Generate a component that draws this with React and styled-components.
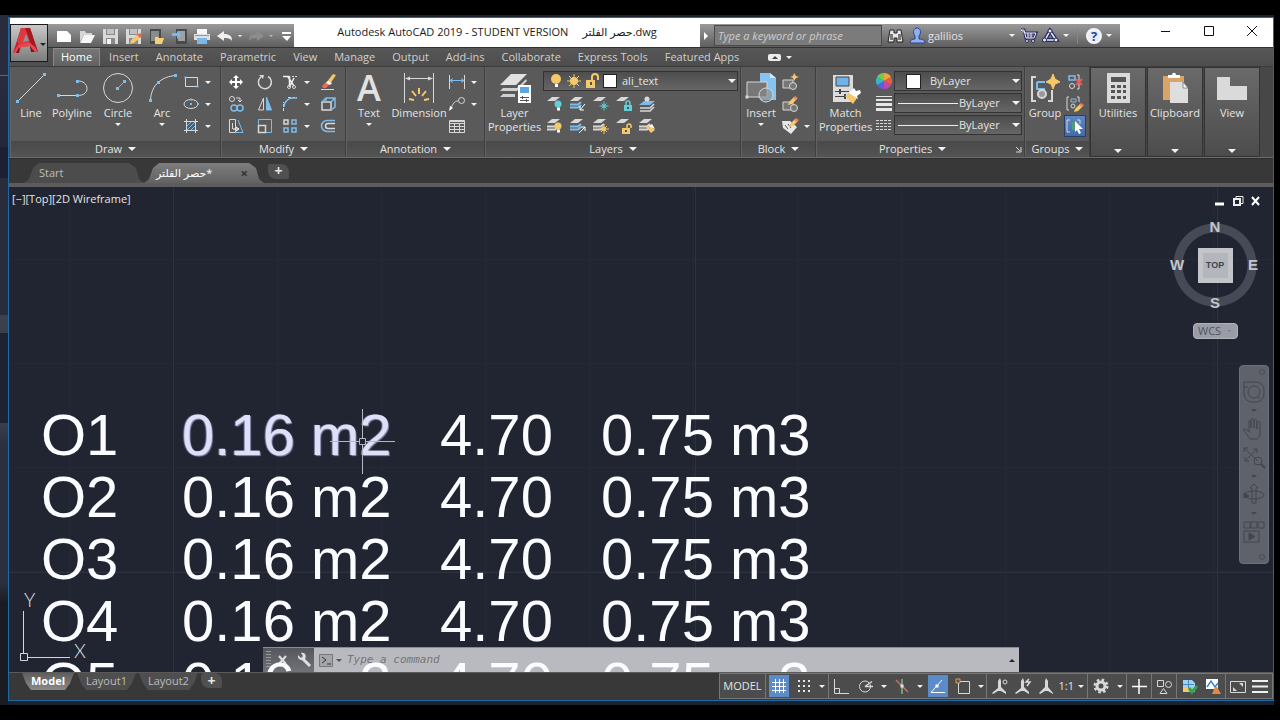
import React from 'react';
import styled, { createGlobalStyle, css } from 'styled-components';

const GlobalStyle = createGlobalStyle`
  * {
    box-sizing: border-box;
  }

  body {
    margin: 0;
    background: #000;
    font-family: 'Open Sans', 'Noto Sans', 'DejaVu Sans', sans-serif;
    font-size: 11px;
    line-height: 14px;
    color: #e4e4e4;
  }

  button,
  input,
  select {
    font: inherit;
    color: inherit;
    border: 0;
    margin: 0;
    padding: 0;
    background: none;
    border-radius: 0;
  }

  a {
    color: inherit;
    text-decoration: none;
  }
`;

const L = '#d8d8d8'; // light stroke
const B = '#7dbdec'; // blue accent
const Y = '#f5c869'; // yellow accent
const T = '#5fd0d8'; // teal accent

/* ---------- icon drawings ---------- */

const Dot = ({ x, y, s = 3, c = B }) => (
  <rect x={x - s / 2} y={y - s / 2} width={s} height={s} fill={c} stroke="none" />
);

const Sheet = ({ y, c = L }) => (
  <path d={`M2 ${y + 4} L7 ${y} H15 L10 ${y + 4} Z`} fill={c} stroke="none" />
);

const Stack = ({ c = L }) => (
  <>
    <Sheet y={3} />
    <path d="M2 10.5H10L13 8M2 13.5H10L13 11" stroke={c} strokeWidth="2" />
  </>
);

const Bulb = ({ x, y, c, r = 3.5 }) => (
  <g stroke="none">
    <circle cx={x} cy={y} r={r} fill={c} />
    <rect x={x - 1} y={y + r} width="3" height="3" fill="#fff" />
  </g>
);

const Sun = ({ x, y, r = 3, c = Y }) => (
  <g stroke={c}>
    <circle cx={x} cy={y} r={r} fill={c} stroke="none" />
    <path d={`M${x} ${y - r - 3}V${y + r + 3}M${x - r - 3} ${y}H${x + r + 3}M${x - r - 1} ${y - r - 1}L${x + r + 1} ${y + r + 1}M${x + r + 1} ${y - r - 1}L${x - r - 1} ${y + r + 1}`} />
  </g>
);

const Lock = ({ x, y, c, open }) => (
  <g>
    <rect x={x} y={y} width="8" height="6" fill={c} stroke="none" />
    <path
      d={open ? `M${x + 5} ${y}v-2a2 2 0 0 1 4 0v2` : `M${x + 2} ${y}v-2a2 2 0 0 1 4 0v2`}
      stroke={c}
      strokeWidth="1.5"
    />
    <rect x={x + 3} y={y + 2} width="2" height="2" fill="#555" stroke="none" />
  </g>
);

const Pencil = ({ x, y }) => (
  <g stroke="none">
    <path d={`M${x} ${y + 8}l1-3 5-5 3 2-5 5z`} fill={Y} />
    <path d={`M${x + 5} ${y + 1}l2-2 3 2-2 2z`} fill="#f08060" />
  </g>
);

const icons = {
  /* application + quick access */
  logo: (
    <g stroke="none">
      <path d="M1 25L9 0h9l8 24h-6l-2-6-9 1-2 6z" fill="#c8202a" />
      <path d="M9 0h9l3 9-5 5-9 3-2-4z" fill="#df3940" />
      <path d="M11 14l3-8 3 7z" fill="#8d959a" />
      <path d="M13 0h5l8 24h-4z" fill="#a51820" />
      <path d="M1 25l5-8 11-3 6 5 3 5h-3l-5-6-8 1-4 2v4z" fill="#e8484c" />
      <path d="M4 25l3-6v6zM19 24l-1-6 4 6z" fill="#7b1119" />
    </g>
  ),
  newFile: <path d="M2 4h10l4 4v7H2z" fill="#fff" stroke="none" />,
  open: (
    <g stroke="none">
      <path d="M2 4h5l1 2h6v2H6l-4 7z" fill="#d6d6d6" />
      <path d="M6 8h11l-4 8H2z" fill="#f6f6f6" />
    </g>
  ),
  save: (
    <g stroke="none">
      <path d="M2 2h15v15H2z" fill="#d9d9d9" />
      <path d="M5 2h9v6H5zM5 11h9v6H5z" fill="#8a8a8a" />
      <path d="M6 2h7v5H6z" fill="#c2c2c2" />
      <path d="M6 12h4v5H6z" fill="#f4f4f4" />
    </g>
  ),
  saveAs: (
    <g stroke="none">
      <path d="M2 2h15v15H2z" fill="#d9d9d9" />
      <path d="M5 2h9v6H5zM5 11h9v6H5z" fill="#8a8a8a" />
      <path d="M6 2h7v5H6z" fill="#c2c2c2" />
      <path d="M6 17l1-4 7-6 3 3-7 6z" fill={Y} />
      <path d="M13 8l3-2 2 2-2 3z" fill="#e0694f" />
    </g>
  ),
  webOpen: (
    <g stroke="none">
      <path d="M3 2h11v15H3z" fill="#4a4a4a" />
      <path d="M4 4h8v10H4z" fill="#8b8b8b" />
      <path d="M8 10h3l1 1h5l-2 6H8z" fill="#f3cf78" />
    </g>
  ),
  webSave: (
    <g stroke="none">
      <path d="M6 2h11v15H6z" fill="#4a4a4a" />
      <path d="M8 4h7v10H8z" fill="#a0a0a0" />
      <path d="M2 6h5V4l5 4-5 4v-3H2z" fill="#7ab8ea" />
    </g>
  ),
  print: (
    <g stroke="none">
      <path d="M4 2h10v5H4z" fill="#f6f6f6" />
      <path d="M1 7h16v6H1z" fill="#dedede" />
      <path d="M4 11h10v6H4z" fill="#7ab8ea" />
      <path d="M2 8h14v1H2z" fill="#999" />
    </g>
  ),
  undo: <path d="M1 9l7-5v3c6 0 8 2 8 7-2-3-4-3-8-3v3z" fill="#f0f0f0" stroke="none" />,
  redo: <path d="M17 9l-7-5v3c-6 0-8 2-8 7 2-3 4-3 8-3v3z" fill="#8d8d8d" stroke="none" />,
  more: <path d="M5 5h9v2H5zM5 9h9l-4 5z" fill="#fff" stroke="none" />,

  /* info center */
  play: <path d="M3 5l4 4-4 4z" fill="#fff" stroke="none" />,
  binoculars: (
    <g stroke="#222" strokeWidth="1">
      <path d="M4 3h4v3h3V3h4l2 12h-6v-4H8v4H2z" fill="#e8e8e8" />
      <path d="M4 7h3v6H4zM12 7h3v6h-3z" fill="#777" stroke="none" />
    </g>
  ),
  user: (
    <g stroke="#2b448c" fill="#8fb0f5">
      <path d="M2 16c0-3 3-4 5-4V9C4 5 6 1 9 1s5 4 2 8v3c3 0 6 1 6 4z" />
    </g>
  ),
  cart: (
    <g>
      <path d="M2 3h3l2 8h8l2-5H6" stroke="#262b5c" strokeWidth="3" />
      <path d="M2 3h3l2 8h8l2-5H6zM9 6v5M12 6v5" stroke="#eef" />
      <circle cx="8" cy="14" r="1.500" fill="#eef" stroke="#262b5c" />
      <circle cx="14" cy="14" r="1.500" fill="#eef" stroke="#262b5c" />
    </g>
  ),
  share: (
    <g>
      <path d="M9 4L4 13h11z" stroke="#262b5c" strokeWidth="4" />
      <path d="M9 4L4 13h11z" stroke="#e8eaff" strokeWidth="1.500" />
      <circle cx="9" cy="4" r="2" fill="#e8eaff" stroke="#262b5c" />
      <circle cx="3.500" cy="13" r="2" fill="#e8eaff" stroke="#262b5c" />
      <circle cx="15" cy="13" r="2" fill="#e8eaff" stroke="#262b5c" />
    </g>
  ),

  /* draw */
  line: (
    <>
      <path d="M3 29L29 3" />
      <Dot x={2.5} y={29.5} />
      <Dot x={29.5} y={2.5} />
    </>
  ),
  polyline: (
    <>
      <path d="M2 23.5H22C27 23.5 31 21 31 16.5S27 9 22 9" />
      <Dot x={2.5} y={23.5} />
      <Dot x={21.5} y={23.5} />
      <Dot x={21.5} y={9.5} />
    </>
  ),
  circle: (
    <>
      <circle cx="16" cy="16" r="14.5" />
      <path d="M16 16l7-7" stroke={B} />
      <Dot x={15.5} y={16.5} />
      <Dot x={22.5} y={9.5} />
    </>
  ),
  arc: (
    <>
      <path d="M4.500 28C5 20 8 14 12 10.500 17 6 23 4 30 3.500" />
      <Dot x={4.5} y={28.5} />
      <Dot x={12.5} y={10.5} />
      <Dot x={29.5} y={3.5} />
    </>
  ),
  rect: (
    <>
      <path d="M4.500 5.500h12v9h-12z" />
      <Dot x={4.5} y={5.5} s={2} />
      <Dot x={16.5} y={14.5} s={2} />
    </>
  ),
  ellipse: (
    <>
      <ellipse cx="10" cy="10" rx="7" ry="4.500" />
      <Dot x={10} y={10} s={2} />
      <Dot x={10} y={5.5} s={2} />
      <Dot x={17} y={10} s={2} />
    </>
  ),
  hatch: (
    <>
      <path d="M5.500 3v14M14.500 3v14M3 5.500h14M3 14.500h14" />
      <path d="M6 10l4-4M6 14l8-8M10 14l4-4" stroke={B} />
    </>
  ),

  /* modify */
  move: (
    <path
      d="M10 3l3 3h-2v3h3V7l3 3-3 3v-2h-3v3h2l-3 3-3-3h2v-3H6v2l-3-3 3-3v2h3V6H7z"
      fill="#fff"
      stroke="none"
    />
  ),
  rotate: (
    <>
      <path d="M13 4.500A6.500 6.500 0 1 1 6 5" strokeWidth="1.500" />
      <path d="M4 3l5 0-1 4z" fill={L} stroke="none" />
    </>
  ),
  trim: (
    <>
      <path d="M3 4.500h6M9.500 4v11M8 5l6 9M14 6l-4 8" stroke="#eee" strokeWidth="1.500" />
      <circle cx="9" cy="15" r="1.500" />
      <circle cx="14" cy="15" r="1.500" />
      <path d="M12 4.500h5" strokeDasharray="2 1" />
    </>
  ),
  erase: (
    <g stroke="none">
      <path d="M8 11l7-9 3 1-6 9z" fill={Y} />
      <path d="M4 14l4-4 4 2-4 4H5z" fill="#ee6a55" />
      <path d="M8 11l2-2 4 2-2 2z" fill="#fff" />
      <path d="M3 17h13v1H3z" fill={L} />
    </g>
  ),
  copy: (
    <>
      <circle cx="6" cy="5" r="2.500" />
      <path d="M10 4h4v4M12 6l2 2 2-2" />
      <g stroke={B} strokeWidth="1.500">
        <circle cx="8" cy="14" r="3" />
        <circle cx="14" cy="14" r="3" />
      </g>
    </>
  ),
  mirror: (
    <>
      <path d="M8.500 4v12h-5z" />
      <path d="M11.500 3v13h5z" fill={B} stroke={B} />
    </>
  ),
  fillet: (
    <>
      <path d="M3.500 17V8M8 3.500h9" strokeDasharray="3 1" />
      <path d="M4 13C4 8 8 4 13 4h4" stroke={B} strokeWidth="1.500" />
    </>
  ),
  explode: (
    <>
      <path d="M4 8h9v8H4z" strokeWidth="1.500" />
      <path d="M4 8l4-4h9v9l-4 3M13 8l4-4M8 4v4" stroke={B} strokeWidth="1.500" />
    </>
  ),
  stretch: (
    <>
      <path d="M3.500 3.500h6v13h-6zM6.500 7v6" />
      <path d="M12 4l5 12.500H9" stroke={B} />
      <path d="M7 13h5M10 11l3 2-3 2" stroke="#fff" />
    </>
  ),
  scale: (
    <>
      <path d="M3.500 8.500V3.500h13v13H11" stroke={B} />
      <path d="M3.500 9.500h7v7h-7z" strokeWidth="1.500" />
    </>
  ),
  array: (
    <>
      <path d="M4 4h4v4H4z" strokeWidth="1.500" />
      <path d="M12 4h4v4h-4zM4 12h4v4H4zM12 12h4v4h-4z" stroke={B} strokeWidth="1.500" />
    </>
  ),
  offset: (
    <>
      <path d="M17 4.500H9a5.500 5.500 0 0 0 0 11h8" stroke={B} strokeWidth="1.500" />
      <path d="M17 7.500h-7a2.500 2.500 0 0 0 0 5h7" strokeWidth="1.500" />
    </>
  ),

  /* annotation */
  dimension: (
    <>
      <path d="M1.500 1v30M30.500 1v30M3 6.500h26" />
      <path d="M2 6.500l5-2v4zM30 6.500l-5-2v4z" fill={L} stroke="none" />
      <path d="M6 27l5 1M9 19l4 5M16 16v6M23 19l-4 5M26 27l-5 1" stroke={Y} strokeWidth="2" />
    </>
  ),
  linear: (
    <>
      <path d="M2.500 3v14M17.500 3v14" />
      <path d="M3 8.500h14M6 6.500l-3 2 3 2M14 6.500l3 2-3 2" stroke={B} />
    </>
  ),
  leader: (
    <>
      <circle cx="14.500" cy="6.500" r="3" />
      <path d="M11 7C7 7 6 10 3.500 15" />
      <path d="M2 17l1-5 3 2z" fill="#fff" stroke="none" />
    </>
  ),
  table: <path d="M2.500 4.500h15v12h-15zM2.500 7.500h15M2.500 10.500h15M2.500 13.500h15M7.500 7v9M12.500 7v9M2.500 5.500h15" />,

  /* layers */
  layerProps: (
    <g stroke="none">
      <path d="M1 13L12 2h16L17 13z" fill="#e2e2e2" />
      <path d="M1 19l3-3h14l9-9 1 2-10 10z" fill="#d0d0d0" />
      <path d="M1 25l3-3h12v3z" fill="#d0d0d0" />
      <path d="M19 13h13v18H19z" fill="#fff" />
      <path d="M21 15h9v6h-9z" fill="#5aa7e6" />
      <path d="M21 25h9v1h-9zM21 28h9v1h-9zM23 24h1v3h-1zM27 27h1v3h-1z" fill="#555" />
    </g>
  ),
  bulb: <Bulb x={9} y={7} c={Y} r={5} />,
  sun: <Sun x={9} y={9} r={4} />,
  unlock: (
    <>
      <path d="M3 8h9v8H3z" fill={Y} stroke="none" />
      <path d="M9 8V5a3 3 0 0 1 6 0v3" stroke={Y} strokeWidth="2" />
      <path d="M7 10h2v3H7z" fill="#555" stroke="none" />
    </>
  ),
  layOff: (
    <>
      <Sheet y={3} />
      <Bulb x={13} y={10} c={T} />
    </>
  ),
  layIso: (
    <>
      <Stack c={B} />
      <path d="M17 10l-5 6M12 12v4h4" stroke="#fff" />
    </>
  ),
  layFreeze: (
    <>
      <Sheet y={3} />
      <Sun x={13} y={12} r={1.5} c={T} />
    </>
  ),
  layLock: (
    <>
      <Sheet y={3} />
      <Lock x={10} y={11} c={T} />
    </>
  ),
  layCurrent: (
    <>
      <path d="M3 17h10l4-4M3 14h10l4-4" stroke={L} strokeWidth="1.500" />
      <path d="M2 11l5-4h11l-5 4z" fill={B} stroke="none" />
      <circle cx="10" cy="5" r="2.500" fill={L} stroke="none" />
    </>
  ),
  layOn: (
    <>
      <Stack />
      <Bulb x={13} y={10} c={Y} />
    </>
  ),
  layUniso: (
    <>
      <Stack c={B} />
      <path d="M11 17l6-6M13 11h4v4" stroke="#fff" />
    </>
  ),
  layThaw: (
    <>
      <Stack />
      <Sun x={13} y={13} r={2} />
    </>
  ),
  layUnlock: (
    <>
      <Sheet y={3} />
      <Lock x={8} y={12} c={Y} open />
    </>
  ),
  layMatch: (
    <>
      <Stack />
      <path d="M9 11l4-2 5 5-4 3z" fill={Y} stroke="none" />
      <path d="M12 10l3-2 3 5z" fill="#fff" stroke="none" />
    </>
  ),

  /* block */
  insert: (
    <>
      <path d="M15 1h10l6 5v22H15z" fill="#86c3f0" stroke="none" />
      <path d="M25 1v5h6" fill="#cfe8fb" stroke="none" />
      <path d="M2 10h20v15H2z" fill="#777" />
      <circle cx="21" cy="23" r="7" fill="#8889" />
      <Dot x={2} y={25} s={3} c={L} />
    </>
  ),
  blockCreate: (
    <>
      <path d="M3 8h10v8H3z" fill="#777" />
      <circle cx="13" cy="14" r="3.500" fill="#777" />
      <path d="M14 1l2 3 3 1-3 1-2 3-1-3-3-1 3-1z" fill={Y} stroke="none" />
    </>
  ),
  blockEdit: (
    <>
      <path d="M3 8h10v8H3z" fill="#777" />
      <circle cx="14" cy="14" r="3.500" fill="#777" />
      <Pencil x={8} y={3} />
    </>
  ),
  attEdit: (
    <>
      <path d="M2 5h8l7 6-6 7-8-6z" fill="#e8e8e8" stroke="none" />
      <path d="M5 9l3 4M8 8l3 4" stroke="#555" />
      <Pencil x={9} y={3} />
    </>
  ),

  /* properties */
  matchProps: (
    <g stroke="none">
      <path d="M3 3h20v27H3z" fill="#dcdcdc" />
      <path d="M6 5h13v9H6z" fill="#6fb3ea" stroke="#444" />
      <path d="M5 19h14v1H5zM5 24h14v1H5zM9 17h2v5H9zM14 22h2v5h-2z" fill="#444" />
      <path d="M15 24l6-4 6 6-4 6z" fill={Y} />
      <path d="M19 21l5-5 2 3 4-1 1 3-4 3 1 3z" fill="#fff" />
    </g>
  ),
  wheel: (
    <g stroke="none">
      <path d="M10 10V2a8 8 0 0 1 7 4z" fill="#f2a53c" />
      <path d="M10 10l7-4a8 8 0 0 1 0 8z" fill="#e85d3c" />
      <path d="M10 10l7 4a8 8 0 0 1-7 4z" fill="#c347b0" />
      <path d="M10 10v8a8 8 0 0 1-7-4z" fill="#5a5fe0" />
      <path d="M10 10l-7 4a8 8 0 0 1 0-8z" fill="#36b7c9" />
      <path d="M10 10L3 6a8 8 0 0 1 7-4z" fill="#6fcb48" />
    </g>
  ),
  weights: (
    <g stroke="none" fill="#e6e6e6">
      <path d="M2 3h16v1H2zM2 6h16v2H2zM2 10h16v3H2zM2 15h16v3H2z" />
    </g>
  ),
  linetypes: (
    <path d="M2 5.500h16M2 8.500h16M2 11.500h16M2 14.500h16" strokeDasharray="3 1" />
  ),

  /* groups */
  group: (
    <>
      <path d="M7 5H3v24h4M19 29h4V18" strokeWidth="2" />
      <path d="M8 10h8M8 10v7h8" stroke={B} strokeWidth="2" />
      <circle cx="13" cy="22" r="4" strokeWidth="2" fill="#999" />
      <path d="M24 2l2 5 5 3-5 2-2 5-2-5-5-2 5-3z" fill={Y} stroke={Y} />
    </>
  ),
  ungroup: (
    <>
      <path d="M4 4h6v4H4z" stroke={B} strokeWidth="1.500" />
      <circle cx="7" cy="14" r="2.500" />
      <path d="M12 3h2v14h-2" />
      <path d="M11 7l6 6M17 7l-6 6" stroke="#ee5a5a" strokeWidth="2" />
    </>
  ),
  groupEdit: (
    <>
      <path d="M4 3H2v13h2M12 3h2v5" />
      <path d="M6 5h5v3H6z" stroke={B} />
      <circle cx="8" cy="12" r="2" />
      <Pencil x={9} y={10} />
    </>
  ),
  groupSelect: (
    <>
      <path d="M5 4H2v12h3M12 4h3v4" />
      <path d="M7 6h4v8H7z" fill="#4f9e72" stroke="none" />
      <path d="M10 5l8 8h-4l2 4-2 1-2-4-2 2z" fill="#fff" stroke="none" />
    </>
  ),

  /* folded panels */
  calculator: (
    <g stroke="none">
      <path d="M5 1h23v30H5z" fill="#dadada" />
      <path d="M9 5h15v5H9z" fill="#555" />
      <path
        d="M9 13h4v3H9zM15 13h4v3h-4zM21 13h3v3h-3zM9 18h4v3H9zM15 18h4v3h-4zM21 18h3v3h-3zM9 24h4v3H9zM15 24h4v3h-4zM21 24h3v3h-3z"
        fill="#555"
      />
    </g>
  ),
  clipboard: (
    <g stroke="none">
      <path d="M4 4h21v24H4z" fill="#d9a566" />
      <path d="M9 6V3h4c0-3 4-3 4 0h4v3z" fill="#fff" />
      <path d="M11 10h13l5 6v15H11z" fill="#dedede" />
      <path d="M24 10v6h5z" fill="#fff" stroke="#888" />
    </g>
  ),
  view: <path d="M1 5h13v9h17v14H1z" fill="#dadada" stroke="none" />,

  /* window controls */
  minimize: <path d="M4 9.500h9" stroke="#111" />,
  maximize: <path d="M4.500 4.500h9v9h-9z" stroke="#111" />,
  close: <path d="M4 4l10 10M14 4L4 14" stroke="#111" />,
  mdiMin: <path d="M4 12h9" stroke="#fff" strokeWidth="3" />,
  mdiRestore: (
    <g stroke="#eee">
      <path d="M7 6V4.500h7v7H12" />
      <path d="M5 7h6v6H5z" strokeWidth="2" />
    </g>
  ),
  mdiClose: <path d="M5 5l7 8M12 5l-7 8" stroke="#fff" strokeWidth="2" />,

  /* navigation bar */
  wheelNav: (
    <g stroke="#42454e">
      <path d="M2 2h12a8 8 0 0 1 8 8v4a8 8 0 0 1-8 8h-4a8 8 0 0 1-8-8z" />
      <circle cx="12" cy="12" r="6" />
      <path d="M2 7h4M18 19l-3-3" />
    </g>
  ),
  pan: (
    <path
      d="M8 22C5 18 3 14 1 13c1-2 3-1 6 2V5c0-2 2-2 2 0v6V3c0-2 3-2 3 0v8V4c0-2 3-2 3 0v8V6c0-2 3-2 3 0v10c0 3-1 5-3 6z"
      stroke="#42454e"
    />
  ),
  zoomNav: (
    <g stroke="#42454e">
      <path d="M2 2l14 13M15 3L3 15M2 6V2h4M11 3h4v4M3 11v4h4" />
      <circle cx="16" cy="15" r="4" />
      <path d="M19 18l4 4" strokeWidth="2" />
    </g>
  ),
  orbit: (
    <g stroke="#42454e">
      <path d="M10 20V5H8l4-4 4 4h-2v15z" />
      <ellipse cx="12" cy="12" rx="10" ry="4" />
      <path d="M2 10v5l5-2z" fill="#42454e" />
    </g>
  ),
  motion: (
    <g stroke="#42454e">
      <path d="M2 2h6v6H2zM9 2h6v6H9zM16 2h6v6h-6zM2 11h15v11H2z" />
      <path d="M7 13l6 3.500-6 3.500z" fill="#42454e" />
    </g>
  ),

  /* command line */
  cmdClose: <path d="M5 5l7 8M12 5l-7 8" stroke="#e0e0e0" strokeWidth="2" />,
  wrench: (
    <>
      <path d="M7 7l8 8" stroke="#e0e0e0" strokeWidth="3" />
      <path d="M3 4l3 3 2-2-2-3c4-1 6 3 4 6-3 3-8 0-7-4z" fill="#e0e0e0" stroke="none" />
    </>
  ),
  prompt: (
    <>
      <path d="M2.500 3.500h13v12h-13z" stroke="#777" fill="#a5a6aa" />
      <path d="M5 6l4 3-4 3M10 13h4" stroke="#333" />
    </>
  ),

  /* status bar */
  grid: <path d="M6.500 3v14M10.500 3v14M14.500 3v14M3 6.500h14M3 10.500h14M3 14.500h14" stroke="#fff" />,
  snap: (
    <path
      d="M4 5h13M4 10h13M4 15h13"
      stroke="#e6e6e6"
      strokeWidth="2"
      strokeDasharray="2 3"
    />
  ),
  ortho: <path d="M3.500 3v14.500H18M3.500 12.500h5v5" />,
  polar: (
    <>
      <circle cx="9" cy="10.500" r="5.500" />
      <path d="M9 10.500h8M9 10.500l7-5" strokeWidth="1.500" />
    </>
  ),
  iso: (
    <>
      <path d="M4 4l12 12" stroke="#c2726c" strokeWidth="1.500" />
      <path d="M10 3v15" stroke="#7fba7a" strokeWidth="1.500" />
      <Dot x={10} y={10} s={3} c="#e6e6e6" />
    </>
  ),
  track: (
    <>
      <path d="M17 16.500H3L14 4" stroke="#fff" />
      <Dot x={9} y={10} s={3} c="#fff" />
    </>
  ),
  osnap: (
    <>
      <path d="M5.500 5.500h11v12h-11z" />
      <path d="M3 3h4v4H3z" stroke="#e0985a" fill="#555" />
    </>
  ),
  annVis: (
    <>
      <path d="M2 17l6-5V5l2-3 1 3v6l5 5v2l-5-3H8l-5 3z" fill={L} stroke="none" />
      <circle cx="15" cy="6" r="2" />
    </>
  ),
  annAuto: (
    <>
      <path d="M2 17l6-5V5l2-3 1 3v6l5 5v2l-5-3H8l-5 3z" fill={L} stroke="none" />
      <path d="M16 3l-3 3h4l-3 4" strokeWidth="1.500" />
    </>
  ),
  annScale: <path d="M3 17l6-6V5l1-3 2 3v6l5 6v1l-5-3H9l-5 3z" fill={L} stroke="none" />,
  gear: (
    <>
      <circle cx="10" cy="10" r="4" strokeWidth="3" />
      <circle cx="10" cy="10" r="6" strokeWidth="3" strokeDasharray="2.400 2.300" />
    </>
  ),
  plus: <path d="M10 3v15M3 10.500h15" stroke="#fff" strokeWidth="1.500" />,
  isolate: (
    <>
      <path d="M3.500 4.500h6v6h-6zM9.500 12.500l3.500 5H6z" />
      <circle cx="14.500" cy="8.500" r="3" />
    </>
  ),
  hardware: (
    <g stroke="none">
      <path d="M4 4h9l3 3v9H4z" fill="#9fd1f3" />
      <path d="M4 12h6v4H4z" fill={Y} />
      <path d="M9 4h1v8H9zM4 8h11v1H4z" fill="#4a8ac0" />
      <path d="M10 12l3 4 5-6" stroke="#35a34a" strokeWidth="3" fill="none" />
    </g>
  ),
  clean: (
    <g stroke="none">
      <path d="M3 3h12v10H3z" fill="#fff" />
      <path d="M4 11l4-6 4 6 3-4" stroke="#3d86c6" fill="none" strokeWidth="1.500" />
      <path d="M9 18l3-7h2l4 7z" fill="#e2894a" />
    </g>
  ),
  fullscreen: (
    <>
      <path d="M2.500 5.500h15v11h-15z" />
      <path d="M11 7h4v4zM5 11v4h4z" fill={L} stroke="none" />
    </>
  ),
  menu: <path d="M2 5h16M2 10.500h16M2 16h16" stroke="#f0f0f0" strokeWidth="2" />,
};

const Svg = styled.svg`
  display: block;
  flex: none;
  overflow: visible;
  fill: none;
  stroke: #d8d8d8;
`;

const Icon = ({ name, size = 20 }) => (
  <Svg width={size} height={size} viewBox={`0 0 ${size} ${size}`} aria-hidden="true">
    {icons[name]}
  </Svg>
);

const Caret = styled.span`
  display: block;
  flex: none;
  width: 0;
  border: ${({ $size }) => $size || 3}px solid transparent;
  border-top-color: ${({ $color }) => $color || '#f2f2f2'};
  border-bottom-width: 0;
`;

/* ---------- desktop and window frame ---------- */

const Desktop = styled.div`
  display: flex;
  height: 100vh;
  padding: 15px 6px 15px 0;
  background: #000;
`;

const BackWindow = styled.div`
  width: 8px;
  flex: none;
  background: linear-gradient(
    #282c3c 60px, #6e6a3c 60px, #6e6a3c 61px, #282c3c 61px, #232838 132px,
    #1b2130 132px, #1b2130 163px, #292d3b 163px, #292d3b 300px, #3b404d 300px,
    #3b404d 318px, #1e2332 318px, #1e2332 408px, #3a3f4d 408px, #2b303e 430px,
    #2b303e 568px, #1a1c24 588px, #1a1c24
  );
`;

const Frame = styled.div`
  flex: 1;
  min-width: 0;
  display: flex;
  padding: 2px 0 4px;
  background: #1a2230;
`;

const Window = styled.main`
  flex: 1;
  min-width: 0;
  display: flex;
  flex-direction: column;
  border: 1px solid #1f6aa5;
  background: #383838;
`;

/* ---------- header ---------- */

const Header = styled.header`
  display: grid;
  grid-template-columns: 38px 1fr;
  grid-template-rows: 29px 19px;
  padding-left: 1px;
  background: #505050;
`;

const AppButton = styled.button`
  grid-row: 1 / 3;
  display: flex;
  align-items: flex-start;
  justify-content: center;
  margin: 6px 0 4px;
  padding-top: 3px;
  border: 1px solid #1c1c1c;
  background: linear-gradient(#c9c9c9, #7c7c7c);
  box-shadow: 0 -6px 0 #fff;

  & > :last-child {
    align-self: center;
  }
`;

const TitleBar = styled.div`
  display: flex;
  align-items: flex-end;
  min-width: 0;
  background: #fff;
`;

const barGradient = css`
  height: 23px;
  background: linear-gradient(#9a9a9a, #5e5e5e);
`;

const QuickAccess = styled.div`
  ${barGradient}
  display: flex;
  align-items: center;
  gap: 5px;
  width: 246px;
  padding-left: 7px;
`;

const BareButton = styled.button`
  display: flex;
  align-items: center;
  justify-content: center;
  flex: none;
`;

const UndoGroup = styled.div`
  display: flex;
  align-items: center;
  gap: 4px;
`;

const Title = styled.h1`
  flex: 1;
  display: flex;
  justify-content: center;
  gap: 14px;
  margin: 0 0 2px;
  align-self: center;
  font-size: 11px;
  font-weight: 400;
  line-height: 16px;
  white-space: nowrap;
  color: #1a1a1a;
`;

const InfoCenter = styled.div`
  ${barGradient}
  display: flex;
  align-items: center;
  gap: 4px;
  width: 420px;
  padding-left: 1px;
`;

const SearchInput = styled.input`
  width: 168px;
  height: 21px;
  padding: 0 3px;
  border: 1px solid #4a4a4a;
  background: #7b7b7b;
  font-style: italic;

  &::placeholder {
    color: #cdcdcd;
    opacity: 1;
  }
`;

const UserButton = styled.button`
  display: flex;
  align-items: center;
  gap: 2px;
  width: 107px;

  & > :last-child {
    margin-left: auto;
  }
`;

const Divider = styled.span`
  width: 1px;
  height: 16px;
  margin: 0 4px;
  background: #858585;
`;

const HelpButton = styled(BareButton)`
  width: 16px;
  height: 16px;
  border: 2px solid #f2f4fa;
  border-radius: 50%;
  background: #e8ecfa;
  color: #2546a0;
  font-size: 13px;
  font-weight: 700;
`;

const WindowControls = styled.div`
  display: flex;
  align-self: stretch;
  width: 153px;
  padding-left: 24px;
`;

const WindowButton = styled(BareButton)`
  width: 43px;
  height: 26px;
`;

const MenuTabs = styled.nav`
  display: flex;
  align-items: stretch;
  padding-left: 5px;
  border-top: 1px solid #333;
  background: linear-gradient(#575757, #4d4d4d);
`;

const MenuTab = styled.a`
  padding: 1px 8px 0 9px;
  line-height: 15px;
  white-space: nowrap;
  color: ${({ $active }) => ($active ? '#fff' : '#cfcfcf')};
  ${({ $active }) =>
    $active &&
    css`
      border: 1px solid #8a8a8a;
      border-bottom: 0;
      padding: 0 7px;
      background: linear-gradient(#777, #616161);
    `}
`;

const RibbonToggle = styled.button`
  display: flex;
  align-items: center;
  gap: 5px;
  margin-left: 21px;
`;

const TogglePill = styled.span`
  display: flex;
  align-items: center;
  justify-content: center;
  width: 13px;
  height: 7px;
  border-radius: 2px;
  background: #ececec;
`;

const UpCaret = styled.span`
  width: 0;
  border: 3px solid transparent;
  border-bottom-color: ${({ $color }) => $color || '#444'};
  border-top-width: 0;
`;

/* ---------- ribbon ---------- */

const Ribbon = styled.section`
  display: flex;
  height: 92px;
  padding-left: 1px;
  border-top: 1px solid #3c3c3c;
  border-bottom: 1px solid #6c6c6c;
  background: #474747;
`;

const Panel = styled.div`
  display: flex;
  flex-direction: column;
  flex: none;
  width: ${({ $width }) => $width}px;
  border-right: 1px solid #3f3f3f;
  border-left: 1px solid #626262;
  background: #5a5a5a;
`;

const PanelBody = styled.div`
  flex: 1;
  display: flex;
  padding-top: 4px;
`;

const PanelTitle = styled.button`
  display: flex;
  align-items: center;
  justify-content: center;
  gap: 7px;
  height: 16px;
  background: linear-gradient(#494949, #545454);
  line-height: 14px;
`;

const TitleText = styled.span`
  display: flex;
  align-items: center;
  gap: 6px;
  flex: ${({ $grow }) => ($grow ? 1 : 'none')};
  justify-content: center;
`;

const BigButton = styled.button`
  display: flex;
  flex-direction: column;
  align-items: center;
  flex: none;
  width: ${({ $width }) => $width}px;
  height: 70px;
  padding-top: 1px;
`;

const BigLabel = styled.span`
  margin: 2px 0 3px;
  line-height: 14px;
  white-space: pre-line;
`;

const TextGlyph = styled.span`
  height: 32px;
  font-family: 'Open Sans', sans-serif;
  font-size: 36px;
  font-weight: 600;
  line-height: 32px;
  color: #e2e2e2;
`;

const ToolGrid = styled.div`
  display: grid;
  grid-template-columns: ${({ $columns }) => $columns};
  grid-auto-rows: 22px;
  align-content: start;
`;

const Tool = styled.button`
  display: flex;
  align-items: center;
  justify-content: ${({ $split }) => ($split ? 'flex-start' : 'center')};
  gap: 4px;
  ${({ $active }) =>
    $active &&
    css`
      border: 1px solid #26406c;
      background: linear-gradient(#5d87c4, #426aa6);
    `}
`;

const Stacked = styled.div`
  display: flex;
  flex-direction: column;
  gap: 2px;
`;

const Combo = styled.label`
  display: flex;
  align-items: center;
  gap: ${({ $gap }) => $gap || 0}px;
  width: ${({ $width }) => $width}px;
  height: 20px;
  padding: 0 1px 0 3px;
  border: 1px solid #333;
  background: linear-gradient(#4d4d4d, #666);

  select {
    flex: 1;
    min-width: 0;
    appearance: none;
    outline: 0;
  }
`;

const Swatch = styled.span`
  width: ${({ $size }) => $size}px;
  height: ${({ $size }) => $size}px;
  margin: 0 ${({ $gap }) => $gap}px 0 ${({ $left }) => $left || 0}px;
  border: 1px solid #222;
  background: #fff;
`;

const Rule = styled.span`
  width: 60px;
  height: 1px;
  background: #eee;
`;

const PropertyRow = styled.div`
  display: flex;
  align-items: center;
`;

const FoldedPanel = styled.button`
  display: flex;
  flex-direction: column;
  align-items: center;
  flex: none;
  width: 56px;
  margin-right: 1px;
  padding: 4px 0 3px;
  border: 1px solid #333;
  background: linear-gradient(#6a6a6a, #4c4c4c);

  & > :last-child {
    margin-top: auto;
  }
`;

/* ---------- document tabs ---------- */

const DocTabs = styled.nav`
  display: flex;
  align-items: flex-end;
  height: 29px;
  padding-left: 15px;
  border-top: 1px solid #2e2e2e;
  border-bottom: 4px solid #5d5d5d;
  background: #383838;
`;

const DocTab = styled.div`
  display: flex;
  align-items: center;
  justify-content: space-between;
  width: 120px;
  height: 20px;
  padding: ${({ $active }) => ($active ? '0 16px 0 12px' : '0 15px')};
  clip-path: polygon(0 100%, 5px 80%, 9px 25%, 15px 0, calc(100% - 15px) 0, calc(100% - 8px) 25%, calc(100% - 5px) 80%, 100% 100%);
  background: ${({ $active }) => ($active ? 'linear-gradient(#7d7d7d, #626262)' : '#4c4c4c')};
  color: ${({ $active }) => ($active ? '#fff' : '#bdbdbd')};
`;

const CloseMark = styled.button`
  color: #333;
  font-size: 13px;
  font-weight: 700;
`;

const AddTab = styled.button`
  width: 21px;
  height: 15px;
  align-self: center;
  margin-left: 4px;
  border-radius: 2px 8px 2px 8px;
  background: #505050;
  font-size: 14px;
  font-weight: 700;
  line-height: 14px;
`;

/* ---------- drawing area ---------- */

const Canvas = styled.section`
  position: relative;
  flex: 1;
  min-height: 0;
  overflow: hidden;
  background-color: #212531;
  background-image:
    linear-gradient(90deg, #2d323e 1px, transparent 1px),
    linear-gradient(#2d323e 1px, transparent 1px),
    linear-gradient(90deg, #242935 1px, transparent 1px),
    linear-gradient(#242935 1px, transparent 1px);
  background-size: 522px 522px, 522px 522px, 104px 104px, 104px 104px;
  background-position: 164px 385px, 164px 385px, 164px 72px, 164px 72px;
`;

const ViewLabel = styled.div`
  position: absolute;
  top: 5px;
  left: 3px;
`;

const Entities = styled.table`
  position: absolute;
  top: 217px;
  left: 32px;
  border-collapse: collapse;
  table-layout: fixed;
  width: 790px;
  pointer-events: none;
  font-family: 'Liberation Sans', Arial, sans-serif;
  font-size: 58px;
  line-height: 62px;
  white-space: nowrap;
  color: #fafcff;

  td {
    height: 62px;
    padding: 0;
  }
`;

const Entity = styled.td`
  ${({ $hover }) =>
    $hover &&
    css`
      color: #dfe0f8;
      text-shadow: 1px 1px 1px #8a90b4, -1px 0 1px #8a90b4;
    `}
`;

const Crosshair = styled.svg`
  position: absolute;
  top: 222px;
  left: 321px;
  fill: none;
  stroke: #b4b7c2;
`;

const Ucs = styled.svg`
  position: absolute;
  left: 9px;
  bottom: 8px;
  fill: none;
  stroke: #d4d6dc;

  text {
    fill: #dfe1e6;
    stroke: none;
    font-family: Lato, sans-serif;
    font-weight: 300;
    font-size: 19px;
  }
`;

const MdiControls = styled.div`
  position: absolute;
  top: 5px;
  right: 8px;
  display: flex;
`;

const Compass = styled.div`
  position: absolute;
  top: 31px;
  right: 11px;
  display: grid;
  grid-template-columns: 18px 58px 18px;
  grid-template-rows: 18px 58px 18px;
  place-items: center;
  font-family: 'Liberation Sans', Arial, sans-serif;
  font-size: 15px;
  font-weight: 700;
  color: #c3c5cc;
  background: radial-gradient(circle, transparent 32px, #464a56 33px, #464a56 41px, transparent 42px);
`;

const Heading = styled.span`
  grid-column: ${({ $col }) => $col};
  grid-row: ${({ $row }) => $row};
`;

const Cube = styled.button`
  grid-column: 2;
  grid-row: 2;
  width: 35px;
  height: 35px;
  border: 5px solid #c3c4c9;
  background: #b4b6be;
  color: #3f4350;
  font-size: 9px;
  font-weight: 700;
  line-height: 12px;
`;

const Wcs = styled.button`
  position: absolute;
  top: 136px;
  right: 35px;
  display: flex;
  align-items: center;
  justify-content: space-between;
  width: 45px;
  height: 16px;
  padding: 0 6px 0 4px;
  border: 1px solid #b0b2ba;
  border-radius: 4px;
  background: #9a9ca6;
  color: #50545f;
`;

const NavBar = styled.div`
  position: absolute;
  top: 178px;
  right: 4px;
  display: flex;
  flex-direction: column;
  align-items: center;
  gap: 5px;
  width: 30px;
  height: 199px;
  padding: 3px 3px;
  border: 1px solid #6d7078;
  border-radius: 4px;
  background: #5f626a;
`;

const NavRing = styled.button`
  align-self: flex-end;
  flex: none;
  width: 6px;
  height: 6px;
  border: 1px solid #4a4d56;
  border-radius: 50%;

  &:last-child {
    margin-top: auto;
  }
`;

const CommandBar = styled.div`
  position: absolute;
  left: 254px;
  right: 254px;
  bottom: 0;
  display: flex;
  align-items: stretch;
  height: 25px;
  background: #b9bac0;
  border-top: 1px solid #8b8d94;
`;

const CommandTools = styled.div`
  display: flex;
  align-items: center;
  gap: 3px;
  width: 51px;
  padding-left: 3px;
  background: linear-gradient(#55575c, #707277);
`;

const Grip = styled.span`
  width: 5px;
  height: 18px;
  background: repeating-linear-gradient(#999 0 1px, transparent 1px 3px);
`;

const CommandInput = styled.input`
  flex: 1;
  min-width: 0;
  padding-left: 5px;
  outline: 0;
  font-family: 'DejaVu Sans Mono', monospace;
  font-size: 11px;
  font-style: italic;
  color: #333;

  &::placeholder {
    color: #75767b;
    opacity: 1;
  }
`;

const CommandPrompt = styled.div`
  display: flex;
  align-items: center;
  gap: 1px;
  padding-left: 3px;
`;

const HistoryButton = styled(BareButton)`
  width: 14px;
`;

/* ---------- bottom bar ---------- */

const BottomBar = styled.footer`
  display: flex;
  justify-content: space-between;
  height: 28px;
  background: #383838;
  border-top: 1px solid #5a5a5a;
`;

const LayoutTabs = styled.nav`
  display: flex;
  align-items: flex-start;
  gap: 3px;
  padding-left: 13px;
`;

const LayoutTab = styled.a`
  height: 17px;
  padding: 0 9px;
  line-height: 15px;
  clip-path: polygon(0 0, 100% 0, calc(100% - 4px) 60%, calc(100% - 9px) 100%, 9px 100%, 4px 60%);
  background: ${({ $active }) => ($active ? 'linear-gradient(#5e5e5e, #8a8a8a)' : '#4e4e4e')};
  color: ${({ $active }) => ($active ? '#fff' : '#bcbcbc')};
  font-weight: ${({ $active }) => ($active ? 700 : 400)};
`;

const AddLayout = styled(AddTab)`
  align-self: flex-start;
  margin-left: 0;
`;

const StatusBar = styled.div`
  display: flex;
  align-items: stretch;
  height: 26px;
`;

const StatusGroup = styled.div`
  display: flex;
  align-items: center;
  gap: ${({ $gap }) => $gap || 0}px;
  padding: 0 ${({ $pad }) => $pad || 0}px;
  border: 1px solid #777;
  border-left-width: ${({ $first }) => ($first ? 1 : 0)}px;
  background: #4c4c4c;
`;

const StatusButton = styled(BareButton)`
  height: 22px;
  gap: 4px;
  background: ${({ $on }) => ($on ? '#5b8cc8' : 'transparent')};
  white-space: nowrap;
`;

/* ---------- data ---------- */

const menuTabs = [
  'Home', 'Insert', 'Annotate', 'Parametric', 'View', 'Manage',
  'Output', 'Add-ins', 'Collaborate', 'Express Tools', 'Featured Apps',
];

const quickTools = ['newFile', 'open', 'save', 'saveAs', 'webOpen', 'webSave', 'print'];

const drawTools = [
  { label: 'Line', icon: 'line', width: 40 },
  { label: 'Polyline', icon: 'polyline', width: 42 },
  { label: 'Circle', icon: 'circle', width: 50, menu: true },
  { label: 'Arc', icon: 'arc', width: 38, menu: true },
];

const modifyTools = [
  'move', 'rotate', 'trim', 'erase',
  'copy', 'mirror', 'fillet', 'explode',
  'stretch', 'scale', 'array', 'offset',
];

const layerTools = [
  'layOff', 'layIso', 'layFreeze', 'layLock', 'layCurrent',
  'layOn', 'layUniso', 'layThaw', 'layUnlock', 'layMatch',
];

const foldedPanels = [
  { label: 'Utilities', icon: 'calculator' },
  { label: 'Clipboard', icon: 'clipboard' },
  { label: 'View', icon: 'view' },
];

const navTools = [
  { icon: 'wheelNav', menu: true },
  { icon: 'pan' },
  { icon: 'zoomNav', menu: true },
  { icon: 'orbit', menu: true },
  { icon: 'motion' },
];

const rows = ['O1', 'O2', 'O3', 'O4', 'O5'];

/* ---------- pieces ---------- */

const Big = ({ icon, label, width, menu }) => (
  <BigButton $width={width}>
    <Icon name={icon} size={32} />
    <BigLabel>{label}</BigLabel>
    {menu && <Caret />}
  </BigButton>
);

const RibbonPanel = ({ title, width, corner, children }) => (
  <Panel $width={width}>
    <PanelBody>{children}</PanelBody>
    <PanelTitle>
      <TitleText $grow={corner}>
        {title}
        <Caret $size={4} />
      </TitleText>
      {corner && (
        <Svg width="9" height="9" viewBox="0 0 9 9">
          <path d="M1 2l4 4M6 2v5H1" />
        </Svg>
      )}
    </PanelTitle>
  </Panel>
);

const HeaderArea = () => (
  <Header>
    <AppButton aria-label="Application menu">
      <Icon name="logo" size={28} />
      <Caret $color="#222" />
    </AppButton>
    <TitleBar>
      <QuickAccess>
        {quickTools.map((name) => (
          <BareButton key={name} aria-label={name}>
            <Icon name={name} size={18} />
          </BareButton>
        ))}
        <UndoGroup>
          <BareButton aria-label="Undo"><Icon name="undo" size={18} /></BareButton>
          <Caret $size={2} />
        </UndoGroup>
        <UndoGroup>
          <BareButton aria-label="Redo"><Icon name="redo" size={18} /></BareButton>
          <Caret $size={2} $color="#bbb" />
          <BareButton aria-label="Customize"><Icon name="more" size={18} /></BareButton>
        </UndoGroup>
      </QuickAccess>
      <Title>
        <span>Autodesk AutoCAD 2019 - STUDENT VERSION</span>
        <bdi dir="ltr">&lrm;حصر الفلتر&lrm;.dwg</bdi>
      </Title>
      <InfoCenter>
        <Svg width="9" height="18" viewBox="0 0 9 18">{icons.play}</Svg>
        <SearchInput type="search" placeholder="Type a keyword or phrase" aria-label="Search" />
        <BareButton aria-label="Find"><Icon name="binoculars" size={18} /></BareButton>
        <UserButton>
          <Icon name="user" size={18} />
          galilios
          <Caret />
        </UserButton>
        <BareButton aria-label="App store"><Icon name="cart" size={18} /></BareButton>
        <BareButton aria-label="Connect"><Icon name="share" size={18} /></BareButton>
        <Caret />
        <Divider />
        <HelpButton>?</HelpButton>
        <Caret />
      </InfoCenter>
      <WindowControls>
        {['minimize', 'maximize', 'close'].map((name) => (
          <WindowButton key={name} aria-label={name}>
            <Icon name={name} size={18} />
          </WindowButton>
        ))}
      </WindowControls>
    </TitleBar>
    <MenuTabs>
      {menuTabs.map((tab, i) => (
        <MenuTab key={tab} href="#" $active={i === 0}>{tab}</MenuTab>
      ))}
      <RibbonToggle aria-label="Minimize ribbon">
        <TogglePill><UpCaret /></TogglePill>
        <Caret />
      </RibbonToggle>
    </MenuTabs>
  </Header>
);

const RibbonArea = () => (
  <Ribbon>
    <RibbonPanel title="Draw" width={211}>
      {drawTools.map((tool) => (
        <Big key={tool.label} {...tool} />
      ))}
      <ToolGrid $columns="38px">
        {['rect', 'ellipse', 'hatch'].map((name) => (
          <Tool key={name} $split aria-label={name}>
            <Icon name={name} />
            <Caret />
          </Tool>
        ))}
      </ToolGrid>
    </RibbonPanel>

    <RibbonPanel title="Modify" width={125}>
      <ToolGrid $columns="28px 30px 36px 24px">
        {modifyTools.map((name, i) => (
          <Tool key={name} $split={i % 4 === 2} aria-label={name}>
            <Icon name={name} />
            {i % 4 === 2 && <Caret />}
          </Tool>
        ))}
      </ToolGrid>
    </RibbonPanel>

    <RibbonPanel title="Annotation" width={139}>
      <BigButton $width={44}>
        <TextGlyph>A</TextGlyph>
        <BigLabel>Text</BigLabel>
        <Caret />
      </BigButton>
      <Big icon="dimension" label="Dimension" width={56} />
      <ToolGrid $columns="36px">
        {['linear', 'leader', 'table'].map((name) => (
          <Tool key={name} $split aria-label={name}>
            <Icon name={name} />
            {name !== 'table' && <Caret />}
          </Tool>
        ))}
      </ToolGrid>
    </RibbonPanel>

    <RibbonPanel title="Layers" width={256}>
      <Big icon="layerProps" label={'Layer\nProperties'} width={57} />
      <Stacked>
        <Combo $width={195}>
          <Icon name="bulb" size={18} />
          <Icon name="sun" size={18} />
          <Icon name="unlock" size={18} />
          <Swatch $size={14} $left={2} $gap={5} />
          <select aria-label="Layer" defaultValue="ali_text">
            <option>ali_text</option>
          </select>
          <Caret $size={4} />
        </Combo>
        <ToolGrid $columns="repeat(5, 23px)">
          {layerTools.map((name) => (
            <Tool key={name} aria-label={name}>
              <Icon name={name} />
            </Tool>
          ))}
        </ToolGrid>
      </Stacked>
    </RibbonPanel>

    <RibbonPanel title="Block" width={75}>
      <Big icon="insert" label="Insert" width={38} menu />
      <ToolGrid $columns="34px">
        {['blockCreate', 'blockEdit', 'attEdit'].map((name) => (
          <Tool key={name} $split aria-label={name}>
            <Icon name={name} />
            {name === 'attEdit' && <Caret />}
          </Tool>
        ))}
      </ToolGrid>
    </RibbonPanel>

    <RibbonPanel title="Properties" width={209} corner>
      <Big icon="matchProps" label={'Match\nProperties'} width={57} />
      <Stacked>
        <PropertyRow>
          <Icon name="wheel" />
          <Combo $width={128}>
            <Swatch $size={15} $left={8} $gap={9} />
            <select aria-label="Object color">
              <option>ByLayer</option>
            </select>
            <Caret $size={4} />
          </Combo>
        </PropertyRow>
        <PropertyRow>
          <Icon name="weights" />
          <Combo $width={128} $gap={1}>
            <Rule />
            <select aria-label="Lineweight">
              <option>ByLayer</option>
            </select>
            <Caret $size={4} />
          </Combo>
        </PropertyRow>
        <PropertyRow>
          <Icon name="linetypes" />
          <Combo $width={128} $gap={1}>
            <Rule />
            <select aria-label="Linetype">
              <option>ByLayer</option>
            </select>
            <Caret $size={4} />
          </Combo>
        </PropertyRow>
      </Stacked>
    </RibbonPanel>

    <RibbonPanel title="Groups" width={65}>
      <Big icon="group" label="Group" width={38} />
      <ToolGrid $columns="22px">
        {['ungroup', 'groupEdit', 'groupSelect'].map((name) => (
          <Tool key={name} $active={name === 'groupSelect'} aria-label={name}>
            <Icon name={name} />
          </Tool>
        ))}
      </ToolGrid>
    </RibbonPanel>

    {foldedPanels.map(({ label, icon }) => (
      <FoldedPanel key={label}>
        <Icon name={icon} size={32} />
        <BigLabel>{label}</BigLabel>
        <Caret $size={4} />
      </FoldedPanel>
    ))}
  </Ribbon>
);

const DrawingArea = () => (
  <Canvas>
    <ViewLabel>[&minus;][Top][2D Wireframe]</ViewLabel>

    <CommandBar>
      <CommandTools>
        <Grip />
        <BareButton aria-label="Close command line"><Icon name="cmdClose" size={18} /></BareButton>
        <BareButton aria-label="Customize command line"><Icon name="wrench" size={18} /></BareButton>
      </CommandTools>
      <CommandPrompt>
        <Icon name="prompt" size={18} />
        <Caret $color="#555" />
      </CommandPrompt>
      <CommandInput placeholder="Type a command" aria-label="Command" />
      <HistoryButton aria-label="Command history"><UpCaret $color="#222" /></HistoryButton>
    </CommandBar>

    <Entities>
      <colgroup>
        <col width="141" />
        <col width="258" />
        <col width="161" />
        <col />
      </colgroup>
      <tbody>
        {rows.map((name, i) => (
          <tr key={name}>
            <Entity>{name}</Entity>
            <Entity $hover={i === 0}>0.16 m2</Entity>
            <Entity>4.70</Entity>
            <Entity>0.75 m3</Entity>
          </tr>
        ))}
      </tbody>
    </Entities>

    <Crosshair width="66" height="66" viewBox="0 0 66 66">
      <path d="M0 32.500h29M36 32.500h29M32.500 0v29M32.500 36v29M29.500 29.500h6v6h-6z" />
    </Crosshair>

    <Ucs width="72" height="80" viewBox="0 0 72 80">
      <path d="M5.500 27V70M9 73.500h43M2.500 69.500h7v7h-7z" />
      <text x="6" y="23">Y</text>
      <text x="56" y="74">X</text>
    </Ucs>

    <MdiControls>
      <BareButton aria-label="Minimize drawing"><Icon name="mdiMin" size={18} /></BareButton>
      <BareButton aria-label="Restore drawing"><Icon name="mdiRestore" size={18} /></BareButton>
      <BareButton aria-label="Close drawing"><Icon name="mdiClose" size={18} /></BareButton>
    </MdiControls>

    <Compass>
      <Heading $col={2} $row={1}>N</Heading>
      <Heading $col={1} $row={2}>W</Heading>
      <Cube>TOP</Cube>
      <Heading $col={3} $row={2}>E</Heading>
      <Heading $col={2} $row={3}>S</Heading>
    </Compass>
    <Wcs>
      WCS
      <Caret $size={2} $color="#7d808a" />
    </Wcs>

    <NavBar>
      <NavRing aria-label="Close navigation bar" />
      {navTools.map(({ icon, menu }) => (
        <React.Fragment key={icon}>
          <BareButton aria-label={icon}>
            <Icon name={icon} size={24} />
          </BareButton>
          {menu && <Caret $color="#42454e" />}
        </React.Fragment>
      ))}
      <NavRing aria-label="Customize navigation bar" />
    </NavBar>
  </Canvas>
);

const Bottom = () => (
  <BottomBar>
    <LayoutTabs>
      <LayoutTab href="#" $active>Model</LayoutTab>
      <LayoutTab href="#">Layout1</LayoutTab>
      <LayoutTab href="#">Layout2</LayoutTab>
      <AddLayout aria-label="New layout">+</AddLayout>
    </LayoutTabs>
    <StatusBar>
      <StatusGroup $first $pad={3}>
        <StatusButton>MODEL</StatusButton>
      </StatusGroup>
      <StatusGroup $gap={5} $pad={3}>
        <StatusButton $on aria-label="Grid"><Icon name="grid" /></StatusButton>
        <StatusButton aria-label="Snap"><Icon name="snap" /></StatusButton>
        <Caret />
      </StatusGroup>
      <StatusGroup $gap={5} $pad={2}>
        <StatusButton aria-label="Ortho"><Icon name="ortho" /></StatusButton>
        <StatusButton aria-label="Polar"><Icon name="polar" /></StatusButton>
        <Caret />
        <StatusButton aria-label="Isometric"><Icon name="iso" /></StatusButton>
        <Caret />
        <StatusButton $on aria-label="Tracking"><Icon name="track" /></StatusButton>
        <StatusButton aria-label="Object snap"><Icon name="osnap" /></StatusButton>
        <Caret />
      </StatusGroup>
      <StatusGroup $gap={3} $pad={3}>
        <StatusButton aria-label="Annotation visibility"><Icon name="annVis" /></StatusButton>
        <StatusButton aria-label="Auto scale"><Icon name="annAuto" /></StatusButton>
        <StatusButton aria-label="Annotation scale"><Icon name="annScale" /></StatusButton>
        <StatusButton>
          1:1
          <Caret />
        </StatusButton>
      </StatusGroup>
      <StatusGroup $gap={6} $pad={3}>
        <StatusButton aria-label="Workspace"><Icon name="gear" /></StatusButton>
        <Caret />
      </StatusGroup>
      <StatusGroup $pad={2}>
        <StatusButton aria-label="Monitor"><Icon name="plus" /></StatusButton>
      </StatusGroup>
      <StatusGroup $pad={2}>
        <StatusButton aria-label="Isolate"><Icon name="isolate" /></StatusButton>
      </StatusGroup>
      <StatusGroup $gap={4} $pad={2}>
        <StatusButton aria-label="Hardware"><Icon name="hardware" /></StatusButton>
        <StatusButton aria-label="Notifications"><Icon name="clean" /></StatusButton>
      </StatusGroup>
      <StatusGroup $gap={2} $pad={2}>
        <StatusButton aria-label="Clean screen"><Icon name="fullscreen" /></StatusButton>
        <StatusButton aria-label="Customization"><Icon name="menu" /></StatusButton>
      </StatusGroup>
    </StatusBar>
  </BottomBar>
);

const App = () => (
  <>
    <GlobalStyle />
    <Desktop>
      <BackWindow />
      <Frame>
        <Window>
          <HeaderArea />
          <RibbonArea />
          <DocTabs>
            <DocTab>Start</DocTab>
            <DocTab $active>
              <bdi dir="ltr">&lrm;حصر الفلتر&lrm;*</bdi>
              <CloseMark aria-label="Close tab">×</CloseMark>
            </DocTab>
            <AddTab aria-label="New tab">+</AddTab>
          </DocTabs>
          <DrawingArea />
          <Bottom />
        </Window>
      </Frame>
    </Desktop>
  </>
);

export default App;
